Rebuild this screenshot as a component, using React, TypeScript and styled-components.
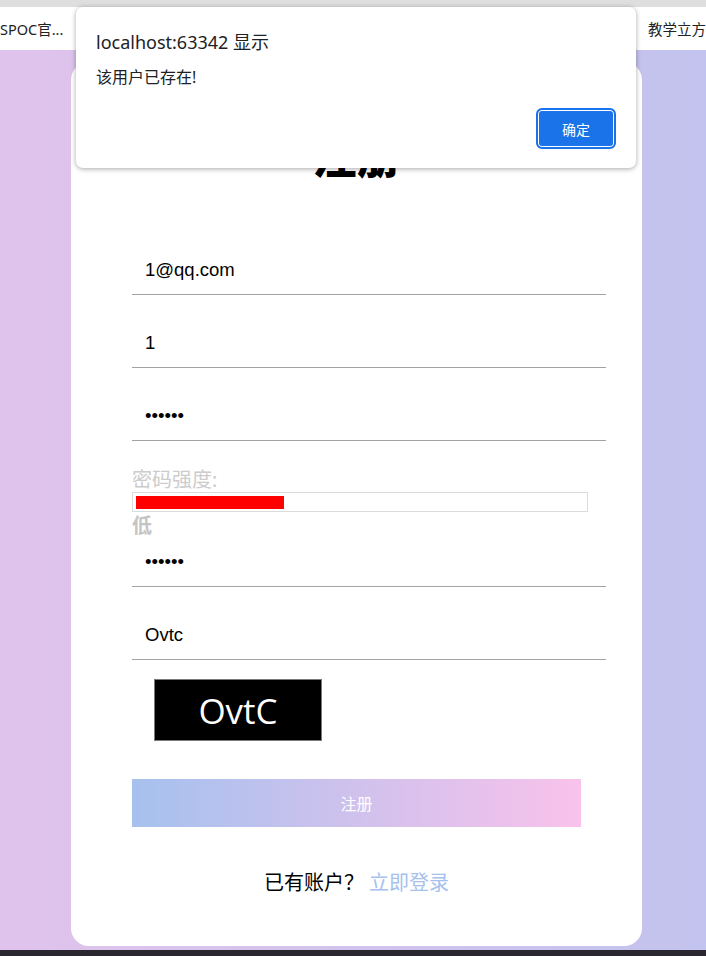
import React from "react";
import styled, { createGlobalStyle } from "styled-components";

const Global = createGlobalStyle`
  html, body { margin: 0; padding: 0; }
  body {
    width: 706px;
    height: 956px;
    overflow: hidden;
    font-family: "Noto Sans", "Noto Sans CJK SC", sans-serif;
  }
  * { box-sizing: border-box; }
`;

const cjk = `"Noto Sans", "Noto Sans CJK SC", sans-serif`;

const Page = styled.div`
  position: relative;
  width: 706px;
  height: 956px;
  display: flex;
  flex-direction: column;
`;

const TopStrip = styled.div`
  height: 7px;
  background: #dedede;
  flex: none;
`;

const BookmarkBar = styled.div`
  height: 43px;
  flex: none;
  background: #ffffff;
  display: flex;
  align-items: center;
  justify-content: space-between;
  overflow: hidden;
  padding-bottom: 1px;
`;

const Bookmark = styled.span`
  font-family: ${cjk};
  font-size: 14.5px;
  color: #222;
  white-space: nowrap;
`;

const Stage = styled.div`
  flex: 1;
  background: linear-gradient(to right, #e0c3ec, #c2c3ee);
  padding: 12px 0 0 71px;
`;

const Card = styled.div`
  width: 571px;
  height: 884px;
  background: #ffffff;
  border-radius: 18px;
  padding-top: 73px;
  display: flex;
  flex-direction: column;
`;

const Title = styled.h1`
  margin: 0;
  height: 44px;
  font-family: ${cjk};
  font-size: 44px;
  line-height: 44px;
  font-weight: 900;
  text-align: center;
  color: #000;
`;

const Form = styled.div`
  margin-top: 65px;
  padding-left: 61px;
  display: flex;
  flex-direction: column;
  align-items: flex-start;
`;

const Field = styled.input<{ $gap?: number }>`
  display: block;
  width: 474px;
  height: 51px;
  margin-top: ${(p) => p.$gap ?? 0}px;
  padding: 2px 13px 0;
  border: none;
  border-bottom: 1px solid #a3a3a3;
  background: transparent;
  outline: none;
  font-family: "Liberation Sans", Arial, sans-serif;
  font-size: 18.5px;
  color: #000;
`;

const StrengthLabel = styled.div`
  margin-top: 28px;
  font-family: ${cjk};
  font-size: 20px;
  line-height: 22px;
  color: #cccccc;
`;

const StrengthBar = styled.div`
  margin-top: 1px;
  width: 456px;
  height: 20px;
  border: 1px solid #dcdcdc;
  padding: 3px 3px 2px;
`;

const StrengthFill = styled.div`
  height: 13px;
  background: #ff0000;
`;

const StrengthLevel = styled.div`
  margin-top: 3px;
  font-family: ${cjk};
  font-size: 20px;
  line-height: 21px;
  font-weight: 700;
  color: #c4c4c4;
`;

const Captcha = styled.div`
  margin: 19px 0 0 22px;
  width: 168px;
  height: 62px;
  background: #000;
  border: 1px solid #7a7a7a;
  display: flex;
  align-items: center;
  justify-content: center;
  font-family: "Open Sans", "Noto Sans", sans-serif;
  font-size: 35px;
  color: #fff;
`;

const SubmitButton = styled.button`
  margin-top: 38px;
  width: 449px;
  height: 48px;
  border: none;
  background: linear-gradient(to right, #a6c1ee, #f9c2eb);
  color: #ffffff;
  font-family: ${cjk};
  font-size: 16px;
  cursor: pointer;
`;

const Footer = styled.div`
  margin-top: 44px;
  text-align: center;
  font-family: ${cjk};
  font-size: 20px;
  line-height: 24px;
  color: #000;
`;

const LoginLink = styled.a`
  margin-left: 5px;
  color: #a6c1ee;
  text-decoration: none;
`;

const BottomStrip = styled.div`
  height: 6px;
  flex: none;
  background: #2b2731;
`;

const Alert = styled.div`
  position: absolute;
  top: 7px;
  left: 76px;
  width: 560px;
  height: 161px;
  background: #fff;
  border-radius: 7px;
  box-shadow: 0 1px 5px rgba(0, 0, 0, 0.35);
  padding: 23px 20px 0 20px;
  display: flex;
  flex-direction: column;
`;

const AlertTitle = styled.div`
  font-family: ${cjk};
  font-size: 18px;
  line-height: 24px;
  color: #202124;
`;

const AlertMessage = styled.div`
  margin-top: 12px;
  font-family: ${cjk};
  font-size: 16px;
  line-height: 22px;
  color: #202124;
`;

const AlertActions = styled.div`
  margin-top: 20px;
  display: flex;
  justify-content: flex-end;
`;

const OkButton = styled.button`
  width: 80px;
  height: 41px;
  border: 2px solid #1a73e8;
  border-radius: 6px;
  box-shadow: inset 0 0 0 1px #ffffff;
  background: #1a73e8;
  color: #fff;
  font-family: ${cjk};
  font-size: 14px;
  padding: 0;
`;

export default function App() {
  return (
    <Page>
      <Global />
      <TopStrip />
      <BookmarkBar>
        <Bookmark>SPOC官...</Bookmark>
        <Bookmark>教学立方</Bookmark>
      </BookmarkBar>
      <Stage>
        <Card>
          <Title>注册</Title>
          <Form>
            <Field type="text" defaultValue="1@qq.com" />
            <Field type="text" defaultValue="1" $gap={22} />
            <Field type="password" defaultValue="123456" $gap={22} />
            <StrengthLabel>密码强度:</StrengthLabel>
            <StrengthBar>
              <StrengthFill style={{ width: "33%" }} />
            </StrengthBar>
            <StrengthLevel>低</StrengthLevel>
            <Field type="password" defaultValue="123456" />
            <Field type="text" defaultValue="Ovtc" $gap={22} />
            <Captcha>OvtC</Captcha>
            <SubmitButton>注册</SubmitButton>
          </Form>
          <Footer>
            已有账户？<LoginLink href="#">立即登录</LoginLink>
          </Footer>
        </Card>
      </Stage>
      <BottomStrip />
      <Alert>
        <AlertTitle>localhost:63342 显示</AlertTitle>
        <AlertMessage>该用户已存在!</AlertMessage>
        <AlertActions>
          <OkButton>确定</OkButton>
        </AlertActions>
      </Alert>
    </Page>
  );
}
